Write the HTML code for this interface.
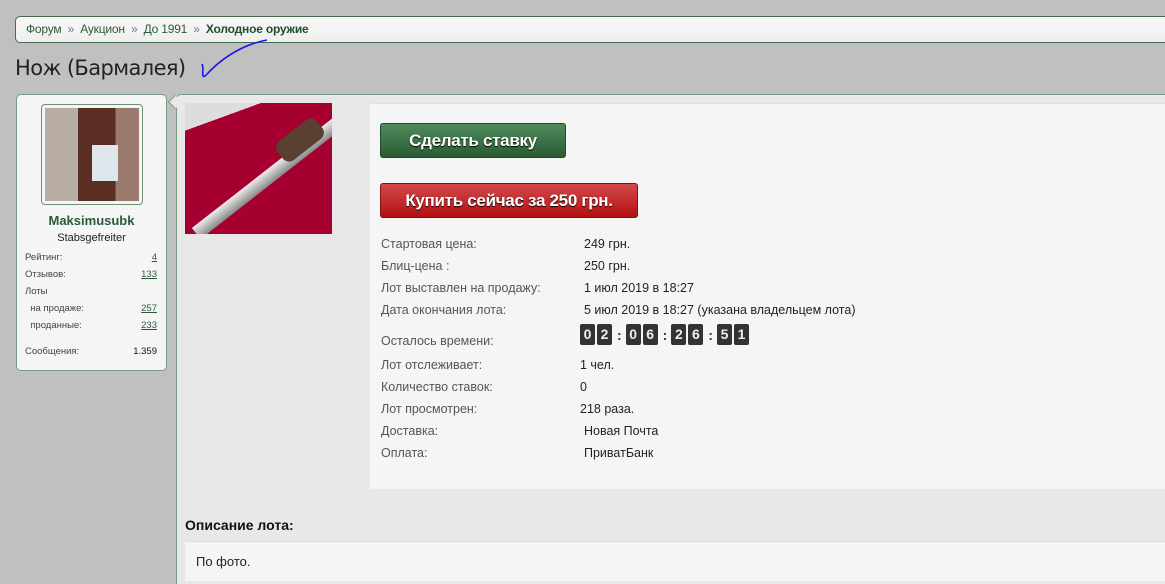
<!DOCTYPE html>
<html><head><meta charset="utf-8"><style>
*{box-sizing:border-box;margin:0;padding:0}
body{width:1165px;height:577px;overflow:hidden;background:#c0c0c0;font-family:"Liberation Sans","DejaVu Sans",sans-serif;position:relative;font-size:12px;color:#333}
.bc{position:absolute;left:15px;top:16px;width:1160px;height:27px;border:1px solid #476b4f;border-radius:5px;background:linear-gradient(#f8f8f8,#efefef);padding:5px 10px;font-size:12px;color:#2d5a3a;letter-spacing:-0.2px}
.bc b{color:#1f4d2d}
.bc span{color:#777;margin:0 3px}
h1{position:absolute;left:15px;top:56px;font-size:21px;font-weight:normal;color:#222;font-family:"DejaVu Sans",sans-serif;letter-spacing:-0.6px}
.side{position:absolute;left:16px;top:94px;width:151px;height:277px;background:#f5f5f5;border:1px solid #7a9a82;border-radius:5px}
.av{position:absolute;left:24px;top:9px;width:102px;height:101px;border:1px solid #6e8f76;border-radius:4px;padding:3px;background:#f5f5f5}
.av div{width:100%;height:100%;background:linear-gradient(90deg,#b8ada3 0 35%,#5a2e22 35% 75%,#9a7b6e 75%);position:relative}
.av div:after{content:"";position:absolute;left:50%;top:40%;width:26px;height:36px;background:#dfe6ee}
.nm{position:absolute;top:118px;width:100%;text-align:center;font-weight:bold;font-size:13px;color:#2a5a3c}
.rk{position:absolute;top:137px;width:100%;text-align:center;font-size:11px;color:#222}
.st{position:absolute;left:8px;width:132px;font-size:9.5px;color:#444;display:flex;justify-content:space-between}
.st u{color:#2a5a3c}
.main{position:absolute;left:176px;top:94px;width:1000px;height:490px;background:#e8e8e8;border-left:1px solid #7a9a82;border-top:1px solid #7a9a82;border-radius:5px 0 0 0}
.tip{position:absolute;left:170px;top:97px;width:10px;height:10px;background:#e8e8e8;border-left:1px solid #7a9a82;border-bottom:1px solid #7a9a82;transform:rotate(45deg)}
.pic{position:absolute;left:185px;top:103px;width:147px;height:131px;background:linear-gradient(160deg,#ddd 0 15%,#a5002f 15% 100%);overflow:hidden}
.pic i{position:absolute;left:-10px;top:62px;width:200px;height:14px;background:linear-gradient(#eee,#888);transform:rotate(-38deg)}
.pic b{position:absolute;left:90px;top:25px;width:50px;height:24px;background:#5a4030;transform:rotate(-38deg);border-radius:8px}
.info{position:absolute;left:370px;top:103px;width:800px;height:386px;background:#f5f5f5;border-top:1px solid #e0e0e0}
.btn{position:absolute;left:10px;height:35px;border-radius:3px;color:#fff;font-weight:bold;font-size:17px;text-align:center;line-height:33px;text-shadow:0 1px 1px #000;letter-spacing:-0.3px}
.g{top:19px;width:186px;background:linear-gradient(#4e8a5c,#2a5c33);border:1px solid #214a2a}
.r{top:79px;width:258px;background:linear-gradient(#d24a4a,#b50f12);border:1px solid #7a1616}
.row{position:absolute;left:11px;font-size:12.5px;color:#555}
.row span{position:absolute;left:203px;white-space:nowrap;color:#222}
.cd{position:absolute;left:210px;top:220px;display:flex;align-items:center}
.cd i{display:inline-block;width:15px;height:21px;background:#333;color:#eee;font-style:normal;font-weight:bold;font-size:14px;text-align:center;line-height:21px;margin-right:2px;border-radius:2px}
.cd s{text-decoration:none;font-weight:bold;font-size:14px;color:#333;margin:0 4px 0 3px}
.dh{position:absolute;left:185px;top:517px;font-weight:bold;font-size:14px;color:#111}
.desc{position:absolute;left:185px;top:541px;width:990px;height:40px;background:#f5f5f5;border-top:1px solid #ddd;padding:12px 11px;font-size:13px;color:#222}
</style></head><body>
<div class="bc">Форум <span>»</span> Аукцион <span>»</span> До 1991 <span>»</span> <b>Холодное оружие</b></div>
<h1>Нож (Бармалея)</h1>
<svg style="position:absolute;left:195px;top:38px" width="80" height="45"><path d="M72 2 C50 6 30 18 16 32 C12 36 9 40 8 38 C7 34 9 30 7 26" stroke="#1a1ae0" stroke-width="1.6" fill="none"/></svg>
<div class="side">
<div class="av"><div></div></div>
<div class="nm">Maksimusubk</div>
<div class="rk">Stabsgefreiter</div>
<div class="st" style="top:157px"><span>Рейтинг:</span><u>4</u></div>
<div class="st" style="top:174px"><span>Отзывов:</span><u>133</u></div>
<div class="st" style="top:191px"><span>Лоты</span></div>
<div class="st" style="top:208px"><span>&nbsp;&nbsp;на продаже:</span><u>257</u></div>
<div class="st" style="top:225px"><span>&nbsp;&nbsp;проданные:</span><u>233</u></div>
<div class="st" style="top:251px"><span>Сообщения:</span><span style="color:#111">1.359</span></div>
</div>
<div class="main"></div>
<div class="tip"></div>
<div class="pic"><i></i><b></b></div>
<div class="info">
<div class="btn g">Сделать ставку</div>
<div class="btn r">Купить сейчас за 250 грн.</div>
<div class="row" style="top:133px">Стартовая цена:<span>249 грн.</span></div>
<div class="row" style="top:155px">Блиц-цена :<span>250 грн.</span></div>
<div class="row" style="top:177px">Лот выставлен на продажу:<span>1 июл 2019 в 18:27</span></div>
<div class="row" style="top:199px">Дата окончания лота:<span>5 июл 2019 в 18:27 (указана владельцем лота)</span></div>
<div class="row" style="top:230px">Осталось времени:</div>
<div class="cd"><i>0</i><i>2</i><s>:</s><i>0</i><i>6</i><s>:</s><i>2</i><i>6</i><s>:</s><i>5</i><i>1</i></div>
<div class="row" style="top:254px">Лот отслеживает:<span style="left:199px">1 чел.</span></div>
<div class="row" style="top:276px">Количество ставок:<span style="left:199px">0</span></div>
<div class="row" style="top:298px">Лот просмотрен:<span style="left:199px">218 раза.</span></div>
<div class="row" style="top:320px">Доставка:<span>Новая Почта</span></div>
<div class="row" style="top:342px">Оплата:<span>ПриватБанк</span></div>
</div>
<div class="dh">Описание лота:</div>
<div class="desc">По фото.</div>
</body></html>
